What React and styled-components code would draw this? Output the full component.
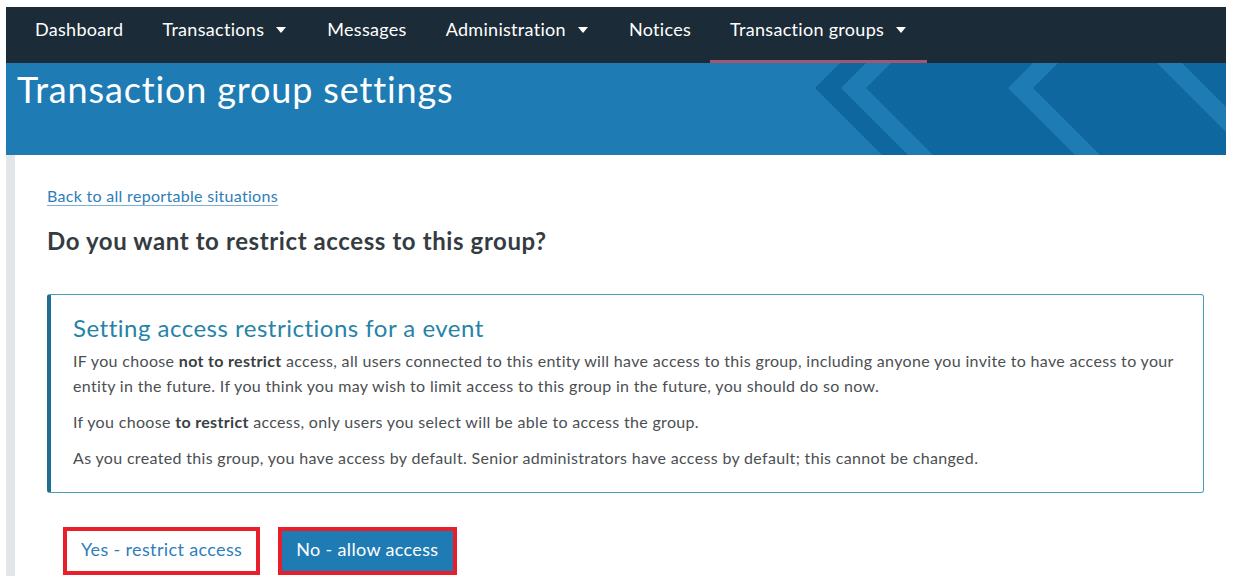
import React from "react";
import styled, { createGlobalStyle } from "styled-components";

const GlobalStyle = createGlobalStyle`
  body {
    margin: 0;
    background: #ffffff;
    font-family: Lato, "Open Sans", Arial, sans-serif;
  }
`;

const Page = styled.div`
  padding: 7px 7px 0 6px;
`;

const NavBar = styled.nav`
  display: flex;
  align-items: stretch;
  height: 56px;
  padding-left: 9px;
  background: #1b2b37;
`;

const NavItem = styled.div`
  position: relative;
  display: flex;
  align-items: center;
  gap: 12px;
  padding: 0 19px 12px 20px;
  color: #ffffff;
  font-size: 18px;
  letter-spacing: 0.3px;
  line-height: 44px;
  white-space: nowrap;

  ${(props) =>
    props.$active &&
    `
    &::after {
      content: "";
      position: absolute;
      left: 0;
      right: 0;
      bottom: 0;
      height: 3px;
      background: #a5566f;
    }
  `}
`;

const Caret = styled.span`
  width: 0;
  height: 0;
  margin: 2px 2px 0 0;
  border-left: 5px solid transparent;
  border-right: 5px solid transparent;
  border-top: 6px solid #ffffff;
`;

const Banner = styled.header`
  position: relative;
  height: 92px;
  background: #1e7bb3;
  overflow: hidden;
`;

const BannerArt = styled.svg`
  position: absolute;
  inset: 0;
  width: 100%;
  height: 100%;
`;

const BannerTitle = styled.h1`
  position: relative;
  margin: 0;
  padding: 3px 0 0 11px;
  color: #ffffff;
  font-size: 36px;
  font-weight: 400;
  letter-spacing: 0.85px;
  line-height: 46px;
`;

const Body = styled.main`
  display: flex;
  min-height: 430px;
`;

const SideRail = styled.div`
  width: 9px;
  flex-shrink: 0;
  background: #e2e6e9;
`;

const Content = styled.section`
  flex: 1;
  padding: 29px 22px 0 32px;
`;

const BackLink = styled.a`
  display: inline-block;
  color: #2d7db9;
  font-size: 16px;
  letter-spacing: 0.3px;
  line-height: 24px;
  text-decoration: underline;
  text-decoration-color: #7fb0d6;
  text-underline-offset: 3px;
  cursor: pointer;
`;

const Question = styled.h2`
  margin: 18px 0 38px;
  color: #353c41;
  font-size: 24px;
  font-weight: 700;
  letter-spacing: 0.6px;
  line-height: 30px;
`;

const InfoBox = styled.div`
  padding: 17px 22px 22px 22px;
  border: 1px solid #4e9dbd;
  border-left: 4px solid #1f6f93;
  border-radius: 3px;
`;

const InfoTitle = styled.h3`
  margin: 0 0 4px;
  color: #2683a7;
  font-size: 24px;
  font-weight: 400;
  letter-spacing: 0.5px;
  line-height: 32px;
`;

const InfoText = styled.p`
  margin: 0 0 11px;
  color: #4b4f52;
  font-size: 16px;
  letter-spacing: 0.33px;
  line-height: 25px;

  &:last-child {
    margin-bottom: 0;
  }

  strong {
    color: #3a3f43;
    font-weight: 700;
  }
`;

const Actions = styled.div`
  display: flex;
  gap: 26px;
  margin: 38px 0 0 20px;
`;

const ActionButton = styled.button`
  height: 40px;
  padding: 0 13px 4px;
  border: 1px solid ${(props) => (props.$primary ? "#1e7bb3" : "#ffffff")};
  outline: 4px solid #e81f2a;
  background: ${(props) => (props.$primary ? "#1e7bb3" : "#ffffff")};
  color: ${(props) => (props.$primary ? "#ffffff" : "#2d7fbb")};
  font-family: inherit;
  font-size: 18px;
  letter-spacing: 0.35px;
  cursor: pointer;
`;

const navItems = [
  { label: "Dashboard" },
  { label: "Transactions", menu: true },
  { label: "Messages" },
  { label: "Administration", menu: true },
  { label: "Notices" },
  { label: "Transaction groups", menu: true, active: true },
];

function HeaderArt() {
  return (
    <BannerArt viewBox="0 0 1220 92" preserveAspectRatio="xMinYMin slice">
      <polygon points="834,0 1220,0 1220,92 876,92 809,25" fill="#0f67a0" />
      <polygon points="835,25 860,0 885,0 860,25 927,92 902,92" fill="#1e7bb3" />
      <polygon points="1002,25 1027,0 1052,0 1027,25 1094,92 1069,92" fill="#1e7bb3" />
      <polygon points="1151,0 1176,0 1268,92 1243,92" fill="#1e7bb3" />
    </BannerArt>
  );
}

export default function App() {
  return (
    <Page>
      <GlobalStyle />
      <NavBar>
        {navItems.map((item) => (
          <NavItem key={item.label} $active={item.active}>
            {item.label}
            {item.menu && <Caret />}
          </NavItem>
        ))}
      </NavBar>

      <Banner>
        <HeaderArt />
        <BannerTitle>Transaction group settings</BannerTitle>
      </Banner>

      <Body>
        <SideRail />
        <Content>
          <BackLink>Back to all reportable situations</BackLink>
          <Question>Do you want to restrict access to this group?</Question>

          <InfoBox>
            <InfoTitle>Setting access restrictions for a event</InfoTitle>
            <InfoText>
              IF you choose <strong>not to restrict</strong> access, all users
              connected to this entity will have access to this group, including
              anyone you invite to have access to your entity in the future. If
              you think you may wish to limit access to this group in the
              future, you should do so now.
            </InfoText>
            <InfoText>
              If you choose <strong>to restrict</strong> access, only users you
              select will be able to access the group.
            </InfoText>
            <InfoText>
              As you created this group, you have access by default. Senior
              administrators have access by default; this cannot be changed.
            </InfoText>
          </InfoBox>

          <Actions>
            <ActionButton>Yes - restrict access</ActionButton>
            <ActionButton $primary>No - allow access</ActionButton>
          </Actions>
        </Content>
      </Body>
    </Page>
  );
}
